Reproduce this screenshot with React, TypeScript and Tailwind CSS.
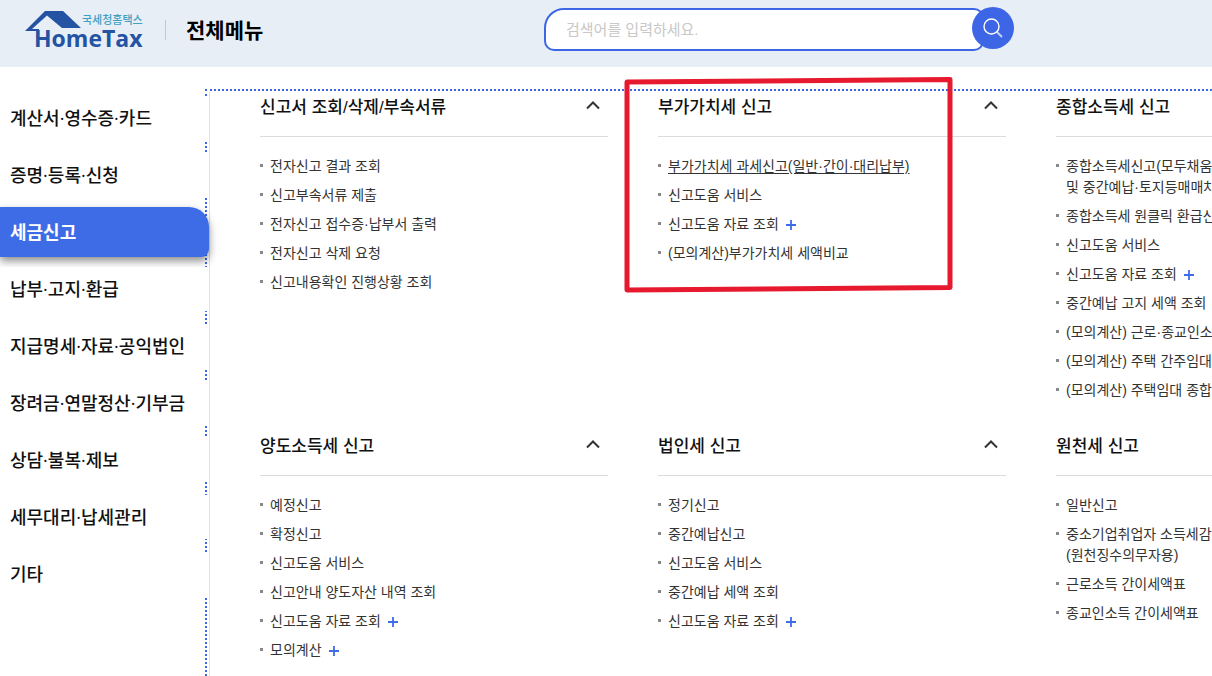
const sideMenu = [
  '계산서·영수증·카드',
  '증명·등록·신청',
  '세금신고',
  '납부·고지·환급',
  '지급명세·자료·공익법인',
  '장려금·연말정산·기부금',
  '상담·불복·제보',
  '세무대리·납세관리',
  '기타'
]

type Item = { label: string; sub?: string; more?: boolean; active?: boolean }
type Group = { title: string; marked?: boolean; items: Item[] }

const groups: Group[] = [
  {
    title: '신고서 조회/삭제/부속서류',
    items: [
      { label: '전자신고 결과 조회' },
      { label: '신고부속서류 제출' },
      { label: '전자신고 접수증·납부서 출력' },
      { label: '전자신고 삭제 요청' },
      { label: '신고내용확인 진행상황 조회' }
    ]
  },
  {
    title: '부가가치세 신고',
    marked: true,
    items: [
      { label: '부가가치세 과세신고(일반·간이·대리납부)', active: true },
      { label: '신고도움 서비스' },
      { label: '신고도움 자료 조회', more: true },
      { label: '(모의계산)부가가치세 세액비교' }
    ]
  },
  {
    title: '종합소득세 신고',
    items: [
      { label: '종합소득세신고(모두채움', sub: '및 중간예납·토지등매매차' },
      { label: '종합소득세 원클릭 환급신' },
      { label: '신고도움 서비스' },
      { label: '신고도움 자료 조회', more: true },
      { label: '중간예납 고지 세액 조회' },
      { label: '(모의계산) 근로·종교인소' },
      { label: '(모의계산) 주택 간주임대' },
      { label: '(모의계산) 주택임대 종합' }
    ]
  },
  {
    title: '양도소득세 신고',
    items: [
      { label: '예정신고' },
      { label: '확정신고' },
      { label: '신고도움 서비스' },
      { label: '신고안내 양도자산 내역 조회' },
      { label: '신고도움 자료 조회', more: true },
      { label: '모의계산', more: true }
    ]
  },
  {
    title: '법인세 신고',
    items: [
      { label: '정기신고' },
      { label: '중간예납신고' },
      { label: '신고도움 서비스' },
      { label: '중간예납 세액 조회' },
      { label: '신고도움 자료 조회', more: true }
    ]
  },
  {
    title: '원천세 신고',
    items: [
      { label: '일반신고' },
      { label: '중소기업취업자 소득세감', sub: '(원천징수의무자용)' },
      { label: '근로소득 간이세액표' },
      { label: '종교인소득 간이세액표' }
    ]
  }
]

function Logo() {
  return (
    <svg width="122" height="46" viewBox="0 0 122 46" role="img" aria-label="국세청홈택스 HomeTax">
      <path d="M0 23 L20 3 H38 L56 20 H37 L22 7.5 L7 21 H14 V23 Z" fill="#2453a3" />
      <text x="57" y="16" fontSize="11" fill="#3fa0bf" fontWeight="500">국세청홈택스</text>
      <text x="9" y="39" fontSize="23" fill="#2453a3" fontWeight="700" fontFamily="'Open Sans', sans-serif">HomeTax</text>
    </svg>
  )
}

function MenuGroup({ group }: { group: Group }) {
  return (
    <section className="relative">
      <div className="flex items-start justify-between border-b border-[#dcdce0] pb-3 pr-2">
        <h2 className="text-[17px] leading-[33px] font-medium text-[#111]">{group.title}</h2>
        <button type="button" aria-label={`${group.title} 접기`} className="pt-[9px]">
          <svg width="14" height="10" viewBox="0 0 14 10" fill="none" stroke="#333" strokeWidth="2">
            <path d="M1 8.5 L7 2.5 L13 8.5" />
          </svg>
        </button>
      </div>
      <ul className="flex flex-col gap-2 pt-[19px] text-sm leading-[21px] text-[#333]">
        {group.items.map((item) => (
          <li key={item.label} className="flex items-start gap-[7px] whitespace-nowrap">
            <span className="mt-2 size-[3px] shrink-0 bg-[#888]" />
            <a href="#" className={item.active ? 'underline underline-offset-2' : ''}>
              {item.label}
              {item.sub && <span className="block">{item.sub}</span>}
            </a>
            {item.more && (
              <button type="button" aria-label={`${item.label} 더보기`} className="flex h-[21px] items-center">
                <svg width="10" height="10" viewBox="0 0 10 10" stroke="#3d6ce6" strokeWidth="1.8">
                  <path d="M0 5 H10 M5 0 V10" />
                </svg>
              </button>
            )}
          </li>
        ))}
      </ul>
      {group.marked && (
        <svg className="pointer-events-none absolute -top-4 -left-9" width="340" height="222" viewBox="0 0 340 222" fill="none" stroke="#e6192e" strokeWidth="5" strokeLinejoin="round">
          <path d="M5 7 L328 4.500 V212.500 L5 215 Z" />
        </svg>
      )}
    </section>
  )
}

export default function App() {
  return (
    <div className="flex min-h-screen flex-col overflow-hidden bg-white font-['Liberation_Sans','Noto_Sans_CJK_KR',sans-serif]">
      {/* Header */}
      <header className="flex h-[67px] shrink-0 items-start bg-[#e8eef6]">
        <div className="flex w-[544px] shrink-0 items-start pt-2 pl-[25px]">
          <a href="#">
            <Logo />
          </a>
          <span className="mt-3 ml-[18px] h-5 w-px bg-[#c4c8cf]" />
          <h1 className="ml-5 text-[21px] leading-[46px] font-bold text-black">전체메뉴</h1>
        </div>
        <form className="flex items-start pt-[7px]" onSubmit={(e) => e.preventDefault()}>
          <input
            type="search"
            aria-label="검색어"
            placeholder="검색어를 입력하세요."
            className="mt-px h-[43px] w-[440px] rounded-[10px] rounded-tl-[20px] border-2 border-[#3d66e6] bg-white px-5 text-[15px] placeholder:text-[#c8c8c8]"
          />
          <button type="submit" aria-label="검색" className="-ml-3 flex size-[42px] items-center justify-center rounded-full bg-[#3d66e6]">
            <svg width="20" height="20" viewBox="0 0 20 20" fill="none" stroke="#fff" strokeWidth="1.4">
              <circle cx="8.500" cy="8.500" r="7.500" />
              <path d="M14 14 L19 19" strokeWidth="2" opacity="0.7" />
            </svg>
          </button>
        </form>
      </header>

      <div className="flex grow pt-[22px]">
        {/* Side menu */}
        <nav className="relative z-10 w-[209px] shrink-0 font-['Open_Sans','Noto_Sans_CJK_KR',sans-serif]">
          <ul className="flex flex-col gap-[13px] pt-[7px]">
            {sideMenu.map((label) =>
              label === '세금신고' ? (
                <li key={label} className="-my-[3px]">
                  <a href="#" aria-current="page" className="block rounded-tr-[20px] rounded-br-lg bg-[#3d6ce6] pl-[10px] text-lg leading-[50px] font-bold text-white shadow-[0_4px_8px_rgba(0,0,0,0.45)]">
                    {label}
                  </a>
                </li>
              ) : (
                <li key={label}>
                  <a href="#" className="block bg-white pl-[10px] text-lg leading-[44px] font-medium text-[#111]">
                    {label}
                  </a>
                </li>
              )
            )}
          </ul>
        </nav>

        {/* Menu groups */}
        <main className="-ml-1 flex grow border-t-2 border-l-2 border-dotted border-[#3d66e6] pl-[2px]">
          <div className="grid grow grid-cols-[repeat(3,348px)] content-start gap-x-[50px] gap-y-[29px] border-l border-solid border-[#dfdff2] pl-[50px]">
            {groups.map((group) => (
              <MenuGroup key={group.title} group={group} />
            ))}
          </div>
        </main>
      </div>
    </div>
  )
}
